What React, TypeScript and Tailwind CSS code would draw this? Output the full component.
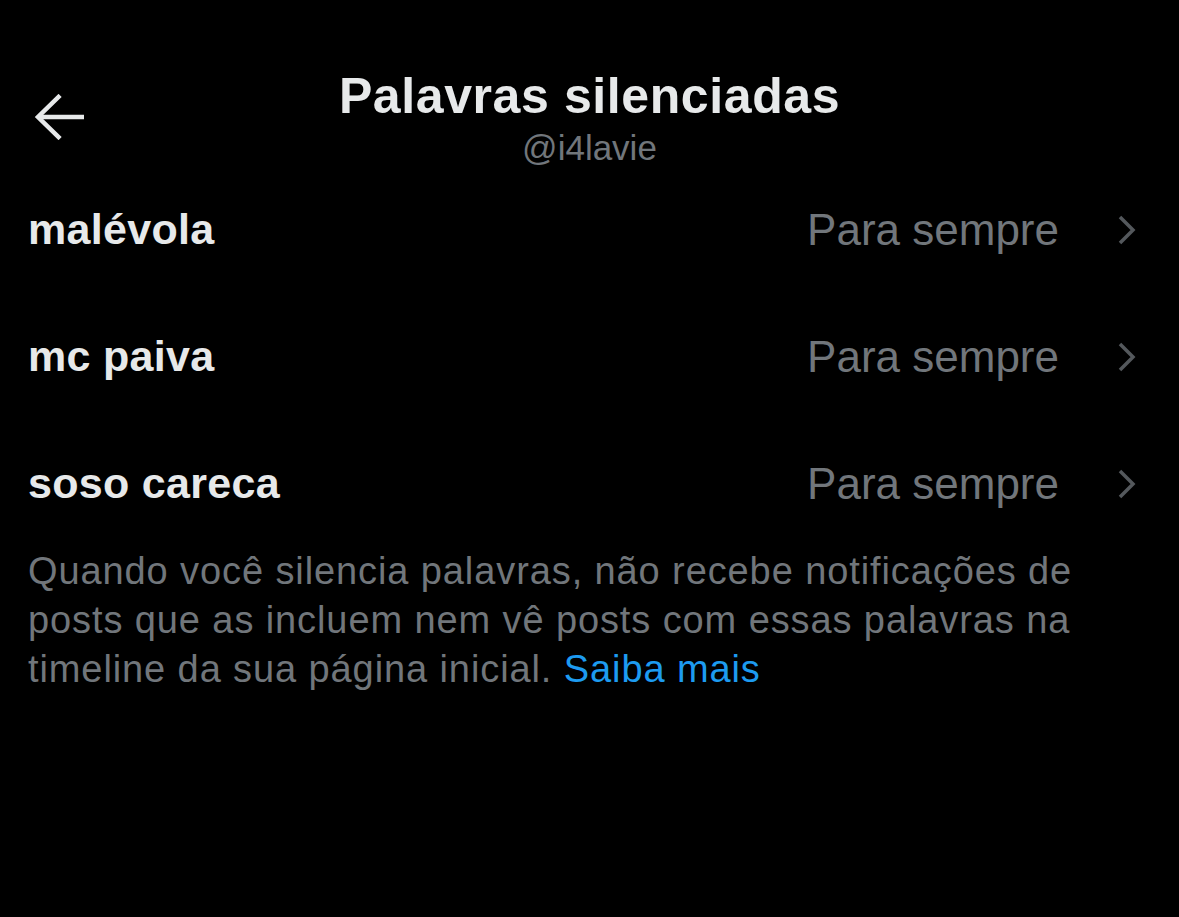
import React from "react";

const words = ["malévola", "mc paiva", "soso careca"];

function BackArrow() {
  return (
    <svg width="52" height="46" viewBox="0 0 52 46" fill="none">
      <path d="M50 23H4" stroke="#e7e9ea" strokeWidth="4.5" />
      <path d="M24.5 3L4 23l20.5 20" stroke="#e7e9ea" strokeWidth="4.5" strokeLinecap="square" />
    </svg>
  );
}

function Chevron() {
  return (
    <svg width="22" height="30" viewBox="0 0 22 30" fill="none">
      <path d="M4 2l13 13L4 28" stroke="#54585c" strokeWidth="3.5" />
    </svg>
  );
}

export default function App() {
  return (
    <div className="min-h-[917px] w-full bg-black font-['Liberation_Sans',Arial,sans-serif]">
      {/* header */}
      <div className="relative flex flex-col items-center pt-[67px]">
        <div className="absolute left-[34px] top-[94px]">
          <BackArrow />
        </div>
        <h1 className="text-[50px] font-bold leading-[58px] tracking-[0.6px] text-[#e7e9ea]">Palavras silenciadas</h1>
        <div className="mt-[4px] text-[35px] leading-[37px] text-[#71767b]">@i4lavie</div>
      </div>

      {/* muted words */}
      <div className="flex flex-col">
        {words.map((w) => (
          <div key={w} className="flex h-[127px] items-center pl-[28px] pr-[41px]">
            <span className="flex-1 text-[43px] font-bold tracking-[0.3px] text-[#e7e9ea]">{w}</span>
            <span className="mr-[57px] text-[44px] text-[#71767b]">Para sempre</span>
            <Chevron />
          </div>
        ))}
      </div>

      <p className="px-[28px] text-[38px] leading-[49px] tracking-[0.9px] text-[#71767b]">
        Quando você silencia palavras, não recebe notificações de
        <br />
        posts que as incluem nem vê posts com essas palavras na
        <br />
        timeline da sua página inicial. <span className="text-[#1d9bf0]">Saiba mais</span>
      </p>
    </div>
  );
}
